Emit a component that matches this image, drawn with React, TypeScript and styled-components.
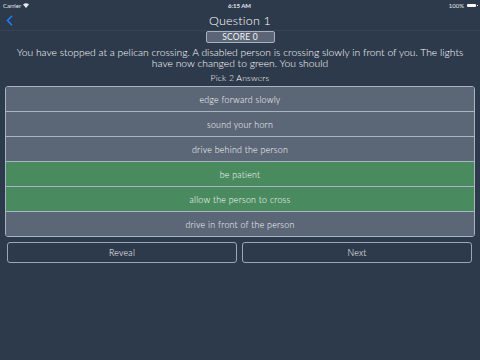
import styled, { createGlobalStyle } from 'styled-components';

const GlobalStyle = createGlobalStyle`
  html, body {
    margin: 0;
    padding: 0;
    background: #2d3a4c;
  }
  body {
    font-family: Lato, "Open Sans", sans-serif;
    font-weight: 300;
    color: #ffffff;
  }
`;

const Screen = styled.div`
  width: 480px;
  height: 360px;
  background: #2d3a4c;
  display: flex;
  flex-direction: column;
`;

const StatusBar = styled.div`
  height: 10px;
  display: grid;
  grid-template-columns: 1fr auto 1fr;
  align-items: center;
  padding: 0 4px 0 3px;
  font-size: 6px;
  font-weight: 400;
  color: #e6e9ee;
`;

const Carrier = styled.div`
  display: flex;
  align-items: center;
  gap: 2px;
`;

const Clock = styled.div`
  font-weight: bold;
`;

const Battery = styled.div`
  display: flex;
  align-items: center;
  justify-content: flex-end;
  gap: 3px;
`;

const BatteryBody = styled.div`
  width: 9px;
  height: 3px;
  background: #fff;
  border-radius: 1px;
  position: relative;

  &::after {
    content: '';
    position: absolute;
    right: -2px;
    top: 1px;
    width: 1px;
    height: 1px;
    background: #fff;
  }
`;

const NavBar = styled.div`
  height: 20px;
  display: grid;
  grid-template-columns: 40px 1fr 40px;
  align-items: center;
  border-bottom: 1px solid #34435a;
`;

const Back = styled.div`
  padding-left: 6px;
  display: flex;
  align-items: center;
`;

const Title = styled.div`
  text-align: center;
  font-size: 12.5px;
  letter-spacing: 0.2px;
`;

const ScoreRow = styled.div`
  display: flex;
  justify-content: center;
`;

const Score = styled.div`
  width: 67px;
  height: 10px;
  background: #5b6576;
  border: 1px solid #a7b2c1;
  border-radius: 2px;
  font-size: 8.5px;
  font-weight: 400;
  line-height: 10px;
  letter-spacing: 0.2px;
  text-align: center;
  color: #f2f4f7;
`;

const Question = styled.div`
  margin-top: 4px;
  padding: 0 10px;
  text-align: center;
  font-size: 10.3px;
  line-height: 10.5px;
`;

const Pick = styled.div`
  margin-top: 5px;
  text-align: center;
  font-size: 8.6px;
  line-height: 10px;
  letter-spacing: 0.2px;
`;

const Answers = styled.div`
  margin: 3px 5px 0;
  border: 1px solid #a9b4c3;
  border-radius: 3px;
  overflow: hidden;
  display: flex;
  flex-direction: column;
`;

const Answer = styled.div<{ $selected?: boolean }>`
  height: 24px;
  display: flex;
  align-items: center;
  justify-content: center;
  font-size: 8.8px;
  letter-spacing: 0.25px;
  background: ${({ $selected }) => ($selected ? '#4a8a5f' : '#5b6677')};

  & + & {
    border-top: 1px solid #a9b4c3;
  }
`;

const Buttons = styled.div`
  display: grid;
  grid-template-columns: 1fr 1fr;
  gap: 5px;
  margin: 5px 8px 0 7px;
`;

const Button = styled.div`
  height: 19px;
  border: 1px solid #9aa7b8;
  border-radius: 3px;
  display: flex;
  align-items: center;
  justify-content: center;
  font-size: 8.8px;
  letter-spacing: 0.25px;
`;

const answers = [
  { text: 'edge forward slowly', selected: false },
  { text: 'sound your horn', selected: false },
  { text: 'drive behind the person', selected: false },
  { text: 'be patient', selected: true },
  { text: 'allow the person to cross', selected: true },
  { text: 'drive in front of the person', selected: false },
];

const App = () => (
  <>
    <GlobalStyle />
    <Screen>
      <StatusBar>
        <Carrier>
          Carrier
          <svg width="6" height="5" viewBox="0 0 12 10">
            <path d="M6 10 L0 3 A9 9 0 0 1 12 3 Z" fill="#e6e9ee" />
          </svg>
        </Carrier>
        <Clock>6:15 AM</Clock>
        <Battery>
          100%
          <BatteryBody />
        </Battery>
      </StatusBar>
      <NavBar>
        <Back>
          <svg width="7" height="11" viewBox="0 0 7 11">
            <path d="M6 0.8 L1.5 5.5 L6 10.2" stroke="#1b7ff2" strokeWidth="1.6" fill="none" />
          </svg>
        </Back>
        <Title>Question 1</Title>
        <div />
      </NavBar>
      <ScoreRow>
        <Score>SCORE 0</Score>
      </ScoreRow>
      <Question>
        You have stopped at a pelican crossing. A disabled person is crossing slowly in front of you. The lights
        have now changed to green. You should
      </Question>
      <Pick>Pick 2 Answers</Pick>
      <Answers>
        {answers.map((a) => (
          <Answer key={a.text} $selected={a.selected}>
            {a.text}
          </Answer>
        ))}
      </Answers>
      <Buttons>
        <Button>Reveal</Button>
        <Button>Next</Button>
      </Buttons>
    </Screen>
  </>
);

export default App;
